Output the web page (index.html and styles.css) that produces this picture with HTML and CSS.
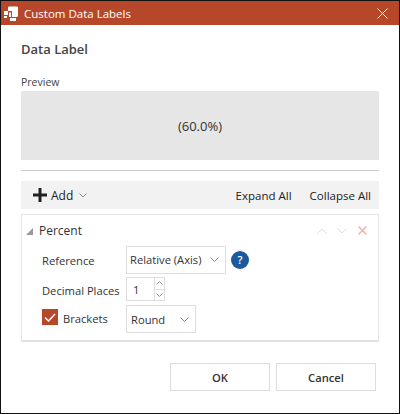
FILE: index.html
```html
<!DOCTYPE html>
<html lang="en">
<head>
<meta charset="utf-8">
<title>Custom Data Labels</title>
<link rel="stylesheet" href="styles.css">
</head>
<body>
<div class="window">
  <header class="titlebar">
    <svg class="logo" width="14" height="15" viewBox="0 0 14 15"><path d="M4 1.500Q4 .500 5 .500h8Q14 .500 14 1.500v8Q14 11 13 11H8V5H4z M0 5h4v4H0z M0 10h3v2H0z M5 6.500h2V11H5z M6 12h6v3H6z" fill="#fff"/></svg>
    <span class="title">Custom Data Labels</span>
    <svg class="close" width="11" height="11" viewBox="0 0 11 11"><path d="M.5.5l10 10M10.500.5l-10 10" stroke="#fff" stroke-width="1" fill="none"/></svg>
  </header>
  <main class="content">
    <h1 class="heading">Data Label</h1>
    <div class="preview-label">Preview</div>
    <div class="preview">(60.0%)</div>
    <hr class="rule">
    <div class="toolbar">
      <svg class="plus" width="14" height="14" viewBox="0 0 14 14"><path d="M5.500 0h3v5.500H14v3H8.500V14h-3V8.500H0v-3h5.500z" fill="#222"/></svg>
      <span class="add">Add</span>
      <svg class="add-caret" width="8" height="5" viewBox="0 0 8 5"><path d="M.5.500l3.500 3.500 3.500-3.500" stroke="#888" fill="none"/></svg>
      <span class="spacer"></span>
      <span class="tool-link">Expand All</span>
      <span class="tool-link">Collapse All</span>
    </div>
    <section class="panel">
      <div class="panel-head">
        <svg class="tri" width="7" height="7" viewBox="0 0 7 7"><path d="M7 0v7H0z" fill="#999"/></svg>
        <span class="panel-title">Percent</span>
        <span class="spacer"></span>
        <svg class="ctl" width="10" height="6" viewBox="0 0 10 6"><path d="M.5 5.500L5 1l4.500 4.500" stroke="#ddd" fill="none"/></svg>
        <svg class="ctl" width="10" height="6" viewBox="0 0 10 6"><path d="M.5.500L5 5l4.500-4.500" stroke="#ddd" fill="none"/></svg>
        <svg class="ctl-x" width="9" height="9" viewBox="0 0 9 9"><path d="M.5.500l8 8M8.500.500l-8 8" stroke="#f4b0b0" stroke-width="1.500" fill="none"/></svg>
      </div>
      <div class="row row-ref">
        <span class="label label-shift">Reference</span>
        <div class="select select-ref"><span>Relative (Axis)</span><svg width="9" height="5" viewBox="0 0 9 5"><path d="M.5.500l4 4 4-4" stroke="#888" fill="none"/></svg></div>
        <span class="help">?</span>
      </div>
      <div class="row row-dec">
        <span class="label label-shift">Decimal Places</span>
        <div class="number">1</div>
        <div class="spin">
          <span class="spin-btn"><svg width="7" height="4" viewBox="0 0 7 4"><path d="M.5 3.500l3-3 3 3" stroke="#999" fill="none"/></svg></span>
          <span class="spin-btn"><svg width="7" height="4" viewBox="0 0 7 4"><path d="M.5.500l3 3 3-3" stroke="#999" fill="none"/></svg></span>
        </div>
      </div>
      <div class="row row-br">
        <span class="check"><svg width="12" height="9" viewBox="0 0 12 9"><path d="M1 4.500l3.500 3.500L11 1" stroke="#fff" stroke-width="1.500" fill="none"/></svg></span>
        <span class="label label-br">Brackets</span>
        <div class="select select-br"><span>Round</span><svg width="9" height="5" viewBox="0 0 9 5"><path d="M.5.500l4 4 4-4" stroke="#888" fill="none"/></svg></div>
      </div>
    </section>
    <footer class="buttons">
      <button class="btn">OK</button>
      <button class="btn">Cancel</button>
    </footer>
  </main>
</div>
</body>
</html>
```
FILE: styles.css
```css
* { box-sizing: border-box; }
html, body { margin: 0; padding: 0; }
body { width: 400px; height: 414px; background: #fff; font-family: "Open Sans", "Noto Sans", sans-serif; color: #333; overflow: hidden; }
.window { width: 400px; height: 414px; border: 1px solid #111; display: flex; flex-direction: column; background: #fff; }
.titlebar { height: 24px; background: #b7472a; color: #fff; display: flex; align-items: center; padding: 0 11px 0 3px; flex: none; }
.logo { margin-right: 6px; }
.title { font-size: 11.500px; flex: 1; }
.content { padding: 0 20px; flex: 1; display: flex; flex-direction: column; }
.heading { margin: 15px 0 0; font-size: 13px; line-height: 18px; font-weight: 600; color: #444; }
.preview-label { margin-top: 17px; font-size: 10.500px; line-height: 14px; color: #444; }
.preview { margin-top: 2px; height: 69px; background: #e6e6e6; display: flex; align-items: center; justify-content: center; font-size: 13px; color: #333; }
.rule { margin: 10px 0 0; border: 0; border-top: 1px solid #ccc; height: 1px; }
.toolbar { margin-top: 10px; height: 28px; background: #f2f2f2; display: flex; align-items: center; padding-left: 12px; flex: none; }
.plus { margin-right: 4px; }
.add { font-size: 12px; color: #222; }
.add-caret { margin-left: 6px; }
.spacer { flex: 1; }
.tool-link { font-size: 11.500px; color: #222; margin-right: 8px; }
.tool-link + .tool-link { margin-left: 10px; }
.panel { margin-top: 5px; height: 128px; border: 1px solid #e4e4e4; border-bottom: 2px solid #e2e2e2; flex: none; display: flex; flex-direction: column; }
.panel-head { display: flex; align-items: center; height: 31px; padding: 0 11px 0 4px; flex: none; }
.tri { margin-right: 6px; margin-top: 2px; }
.panel-title { font-size: 12px; color: #333; }
.ctl { margin-right: 10px; }
.ctl-x { margin-left: 1px; }
.row { display: flex; align-items: center; padding-left: 20px; flex: none; }
.label { font-size: 11.200px; color: #333; }
.label-shift { padding-top: 2px; }
.row-ref { height: 27px; }
.row-ref .label { width: 84px; }
.select { height: 28px; border: 1px solid #ddd; display: flex; align-items: center; justify-content: space-between; font-size: 11.200px; padding: 0 6px 0 3px; background: #fff; color: #333; }
.select-ref { width: 100px; }
.help { margin-left: 5px; width: 18px; height: 18px; border-radius: 50%; background: #1b5a9c; color: #fff; font-size: 11px; font-weight: 600; display: flex; align-items: center; justify-content: center; }
.row-dec { height: 24px; margin-top: 4px; }
.row-dec .label { width: 84px; }
.number { width: 29px; height: 24px; border: 1px solid #ddd; font-size: 11.200px; display: flex; align-items: center; padding-left: 6px; }
.spin { width: 10px; height: 24px; display: flex; flex-direction: column; }
.spin-btn { flex: 1; border: 1px solid #ddd; border-left: 0; display: flex; align-items: center; justify-content: center; }
.spin-btn + .spin-btn { border-top: 0; }
.row-br { height: 28px; margin-top: 4px; }
.check { width: 16px; height: 16px; background: #b7472a; display: flex; align-items: center; justify-content: center; margin-right: 5px; margin-top: -4px; }
.label-br { width: 63px; margin-top: -2px; }
.select-br { width: 70px; padding-left: 4px; }
.buttons { margin-top: 21px; display: flex; justify-content: flex-end; gap: 6px; padding-right: 3px; }
.btn { width: 100px; height: 28px; background: #fff; border: 1px solid #ddd; font-family: inherit; font-size: 11.200px; font-weight: 600; color: #333; padding: 0; }
```
